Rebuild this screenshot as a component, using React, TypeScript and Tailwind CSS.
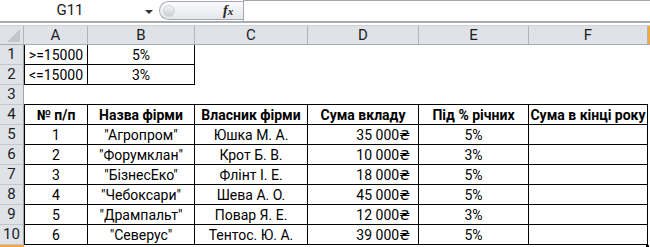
import React from "react";

type Cell = { t?: string; a?: "c" | "r"; b?: boolean; bb?: boolean; bold?: boolean };

const colW = ["w-[64px]", "w-[107px]", "w-[113px]", "w-[111px]", "w-[110px]", "w-[119px]"];
const letters = ["A", "B", "C", "D", "E", "F"];

const hdr: Cell[] = ["№ п/п", "Назва фірми", "Власник фірми", "Сума вкладу", "Під % річних", "Сума в кінці року"].map(
  (t) => ({ t, b: true, bold: true })
);

const data: [string, string, string, string, string][] = [
  ["1", "\"Агропром\"", "Юшка М. А.", "35 000₴", "5%"],
  ["2", "\"Форумклан\"", "Крот Б. В.", "10 000₴", "3%"],
  ["3", "\"БізнесЕко\"", "Флінт І. Е.", "18 000₴", "5%"],
  ["4", "\"Чебоксари\"", "Шева А. О.", "45 000₴", "5%"],
  ["5", "\"Дрампальт\"", "Повар Я. Е.", "12 000₴", "3%"],
  ["6", "\"Северус\"", "Тентос. Ю. А.", "39 000₴", "5%"],
];

const rows: Cell[][] = [
  [{ t: ">=15000", b: true }, { t: "5%", b: true }, {}, {}, {}, {}],
  [{ t: "<=15000", b: true }, { t: "3%", b: true }, {}, {}, {}, {}],
  [{ bb: true }, { bb: true }, { bb: true }, { bb: true }, { bb: true }, { bb: true }],
  hdr,
  ...data.map((r) => [
    { t: r[0], b: true },
    { t: r[1], b: true },
    { t: r[2], b: true },
    { t: r[3], b: true, a: "r" as const },
    { t: r[4], b: true },
    { t: "", b: true },
  ]),
];

function CellBox({ c, i }: { c: Cell; i: number }) {
  let border = "";
  if (c.b) border = "border-r border-b border-black" + (i === 0 ? " border-l" : "");
  else if (c.bb) border = "border-b border-black";
  const align = c.a === "r" ? "justify-end pr-[8px]" : "justify-center";
  return (
    <div
      className={`${colW[i]} h-full shrink-0 flex items-center ${align} ${border} ${
        c.bold ? "font-bold" : ""
      } whitespace-nowrap overflow-visible`}
    >
      {c.t}
    </div>
  );
}

export default function App() {
  return (
    <div className="w-[650px] h-[247px] overflow-hidden bg-white text-black font-['Roboto','DejaVu_Sans',sans-serif] text-[14px] leading-none">
      {/* formula bar */}
      <div className="h-[23px] flex border-b-2 border-[#a9adb2]">
        <div className="w-[159px] shrink-0 flex items-center relative">
          <span className="w-[140px] text-center text-[15px] text-[#1a1a1a]">G11</span>
          <span className="absolute left-[145px] top-[10px] w-0 h-0 border-l-[4px] border-r-[4px] border-t-[4px] border-l-transparent border-r-transparent border-t-[#333]" />
        </div>
        <div className="w-[84px] shrink-0 mt-[1px] mb-[1px] rounded-l-full border border-r-0 border-[#a4a8ad] bg-gradient-to-b from-[#fbfbfc] to-[#e4e7eb] flex items-center relative">
          <span className="absolute left-[3px] top-[3px] w-[12px] h-[12px] rounded-full bg-gradient-to-b from-[#f4f4f4] to-[#c9cdd2] border border-[#d0d3d7]" />
          <span className="absolute left-[63px] top-[2px] font-['Liberation_Serif',serif] italic font-bold text-[14px] text-[#222]">
            f<span className="text-[11px]">x</span>
          </span>
        </div>
        <div className="flex-1 border-l border-t border-[#a4a8ad] bg-white" />
      </div>
      <div className="h-[2px]" />
      {/* column headers */}
      <div className="h-[20px] flex bg-[#dfe3e8] border-b border-[#a9aeb4] border-t border-t-[#cfd3d8]">
        <div className="w-[24px] shrink-0 border-r border-[#b1b5ba] relative overflow-hidden">
          <svg className="absolute right-[3px] bottom-[2px]" width="13" height="13" viewBox="0 0 13 13">
            <polygon points="13,0 13,13 0,13" fill="#c3c7cc" />
          </svg>
        </div>
        {letters.map((l, i) => (
          <div
            key={l}
            className={`${colW[i]} shrink-0 flex items-center justify-center border-r border-[#b1b5ba] text-[15px] text-[#1d1d1d]`}
          >
            {l}
          </div>
        ))}
        <div className="flex-1 bg-[#f5c77e] border-l-2 border-[#f2a93b]" />
      </div>
      {/* rows */}
      {rows.map((r, ri) => (
        <div key={ri} className="h-[20px] flex">
          <div className="w-[24px] shrink-0 bg-[#dfe3e8] border-r border-[#9ea3a9] border-b border-b-[#c4c8cd] flex items-center justify-center text-[15px] text-[#1d1d1d]">
            {ri + 1}
          </div>
          {r.map((c, i) => (
            <CellBox key={i} c={c} i={i} />
          ))}
        </div>
      ))}
      <div className="h-[4px] flex">
        <div className="w-[24px] shrink-0 bg-[#f5c77e] border-t-2 border-[#f2a93b]" />
        <div className="w-[622px]" />
        <div className="w-[3px] bg-black" />
      </div>
    </div>
  );
}
